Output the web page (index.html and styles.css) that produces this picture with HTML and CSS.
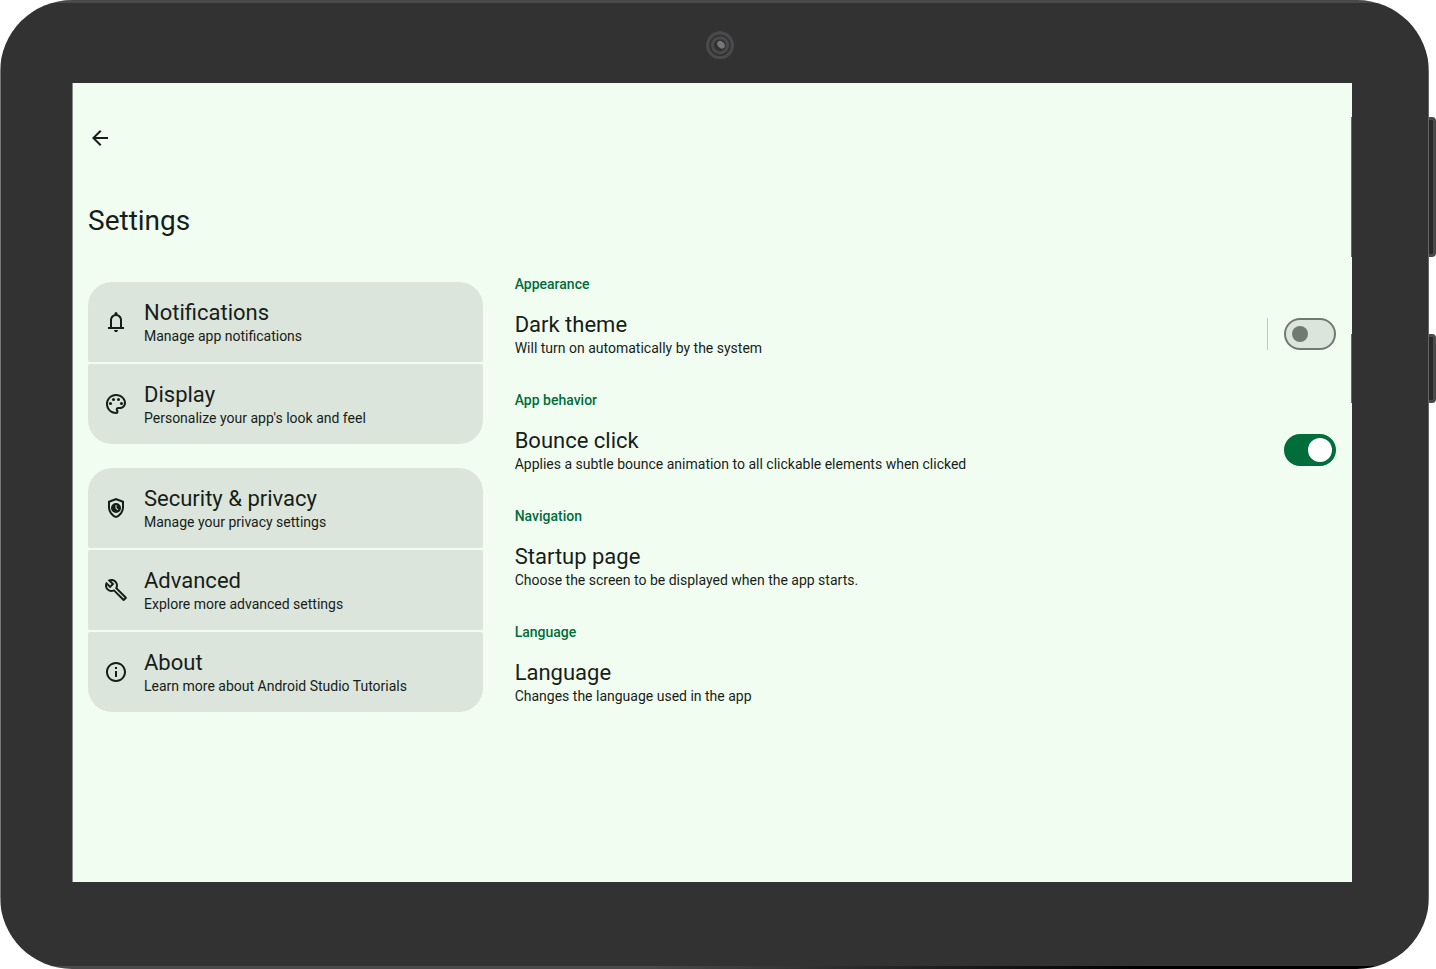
FILE: index.html
```html
<!DOCTYPE html>
<html lang="en">
<head>
<meta charset="utf-8">
<meta name="viewport" content="width=device-width, initial-scale=1">
<title>Settings</title>
<link rel="stylesheet" href="styles.css">
</head>
<body>
<div class="device">
  <span class="key key-volume"></span>
  <span class="key key-power"></span>
  <div class="bezel">
    <svg class="camera" viewBox="0 0 28 28" aria-hidden="true">
      <circle cx="14" cy="14.3" r="12.4" fill="#323232" stroke="#4a4a4a" stroke-width="3.2"/>
      <circle cx="14" cy="14.3" r="7.6" fill="#323232" stroke="#4a4a4a" stroke-width="3"/>
      <ellipse cx="15" cy="13.8" rx="4.3" ry="3.2" transform="rotate(45 15 13.8)" fill="#77777b"/>
    </svg>
    <div class="screen">
      <header class="app-bar">
        <button class="back" type="button" aria-label="Back">
          <svg class="icon" viewBox="0 0 24 24"><path d="M20 11H7.83l5.59-5.59L12 4l-8 8 8 8 1.41-1.41L7.83 13H20v-2z"/></svg>
        </button>
        <h1 class="page-title">Settings</h1>
      </header>
      <main class="panes">
        <nav class="menu" aria-label="Settings">
          <div class="group">
            <a class="card" href="#notifications">
              <svg class="icon" viewBox="0 0 24 24" aria-hidden="true"><path d="M4 19v-2h2v-7q0-2.07 1.25-3.69T10.5 4.2v-.7q0-.62.44-1.06T12 2t1.06.44T13.5 3.5v.7q2 .5 3.25 2.11T18 10v7h2v2H4Zm8 3q-.83 0-1.41-.59T10 20h4q0 .83-.59 1.41T12 22Zm-4-5h8v-7q0-1.65-1.18-2.83T12 6 9.18 7.17 8 10v7Z"/></svg>
              <span class="label"><span class="title">Notifications</span><span class="summary">Manage app notifications</span></span>
            </a>
            <a class="card" href="#display">
              <svg class="icon" viewBox="0 0 24 24" aria-hidden="true"><path d="M12 22C6.49 22 2 17.51 2 12S6.49 2 12 2s10 4.04 10 9c0 3.31-2.69 6-6 6h-1.77c-.28 0-.5.22-.5.5 0 .12.05.23.13.33.41.47.64 1.06.64 1.67A2.5 2.5 0 0 1 12 22zm0-18c-4.41 0-8 3.59-8 8s3.59 8 8 8c.28 0 .5-.22.5-.5a.54.54 0 0 0-.14-.35c-.41-.46-.63-1.05-.63-1.65a2.5 2.5 0 0 1 2.5-2.5H16c2.21 0 4-1.79 4-4 0-3.86-3.59-7-8-7z"/><circle cx="6.5" cy="11.5" r="1.5"/><circle cx="9.5" cy="7.5" r="1.5"/><circle cx="14.5" cy="7.5" r="1.5"/><circle cx="17.5" cy="11.5" r="1.5"/></svg>
              <span class="label"><span class="title">Display</span><span class="summary">Personalize your app's look and feel</span></span>
            </a>
          </div>
          <div class="group">
            <a class="card" href="#privacy">
              <svg class="icon" viewBox="0 0 24 24" aria-hidden="true"><path d="M12 22q-3.48-.88-5.74-3.99T4 11.1V5l8-3 8 3v6.1q0 3.8-2.26 6.91T12 22Zm0-2.1q2.6-.83 4.3-3.3T18 11.1V6.38l-6-2.25-6 2.25v4.72q0 3.03 1.7 5.5T12 19.9Z"/><path fill-rule="evenodd" d="M12 7a5 5 0 1 1 0 10a5 5 0 0 1 0-10Zm1.65 7.35.7-.7-1.85-1.85V9h-1v3.2Z"/></svg>
              <span class="label"><span class="title">Security &amp; privacy</span><span class="summary">Manage your privacy settings</span></span>
            </a>
            <a class="card" href="#advanced">
              <svg class="icon" viewBox="0 0 24 24" aria-hidden="true"><path d="M22.61 18.99l-9.08-9.08c.93-2.34.45-5.1-1.44-7C9.79.61 6.21.4 3.66 2.26L7.5 6.11 6.08 7.52 2.25 3.69C.39 6.23.6 9.82 2.9 12.11c1.86 1.86 4.57 2.35 6.89 1.48l9.11 9.11c.39.39 1.02.39 1.41 0l2.3-2.3c.4-.38.4-1.01 0-1.41zm-3 1.6l-9.46-9.46c-.61.45-1.29.72-2 .82-1.36.2-2.79-.21-3.83-1.25C3.37 9.76 2.93 8.5 3 7.26l3.09 3.09 4.24-4.24-3.09-3.09c1.24-.07 2.49.37 3.44 1.31 1.08 1.08 1.49 2.57 1.24 3.96-.12.71-.42 1.37-.88 1.96l9.45 9.45-.88.89z"/></svg>
              <span class="label"><span class="title">Advanced</span><span class="summary">Explore more advanced settings</span></span>
            </a>
            <a class="card" href="#about">
              <svg class="icon" viewBox="0 0 24 24" aria-hidden="true"><path d="M11 7h2v2h-2zm0 4h2v6h-2zm1-9C6.48 2 2 6.48 2 12s4.48 10 10 10 10-4.48 10-10S17.52 2 12 2zm0 18c-4.41 0-8-3.59-8-8s3.59-8 8-8 8 3.59 8 8-3.59 8-8 8z"/></svg>
              <span class="label"><span class="title">About</span><span class="summary">Learn more about Android Studio Tutorials</span></span>
            </a>
          </div>
        </nav>
        <div class="details">
          <section>
            <h2 class="section-title">Appearance</h2>
            <div class="row">
              <label class="label" for="dark-theme"><span class="title">Dark theme</span><span class="summary">Will turn on automatically by the system</span></label>
              <span class="divider"></span>
              <input class="switch" id="dark-theme" type="checkbox" role="switch">
            </div>
          </section>
          <section>
            <h2 class="section-title">App behavior</h2>
            <div class="row">
              <label class="label" for="bounce-click"><span class="title">Bounce click</span><span class="summary">Applies a subtle bounce animation to all clickable elements when clicked</span></label>
              <input class="switch" id="bounce-click" type="checkbox" role="switch" checked>
            </div>
          </section>
          <section>
            <h2 class="section-title">Navigation</h2>
            <button class="row" type="button"><span class="label"><span class="title">Startup page</span><span class="summary">Choose the screen to be displayed when the app starts.</span></span></button>
          </section>
          <section>
            <h2 class="section-title">Language</h2>
            <button class="row" type="button"><span class="label"><span class="title">Language</span><span class="summary">Changes the language used in the app</span></span></button>
          </section>
        </div>
      </main>
    </div>
    <span class="edge edge-volume"></span>
    <span class="edge edge-power"></span>
  </div>
</div>
</body>
</html>
```
FILE: styles.css
```css
* {
  box-sizing: border-box;
}

body {
  margin: 0;
  background: #fff;
  color: #171d19;
  font-family: Roboto, "Noto Sans", sans-serif;
}

.device {
  position: relative;
  display: flex;
  min-height: 100vh;
  padding-right: 7px;
}

.bezel {
  position: relative;
  flex: 1;
  display: flex;
  flex-direction: column;
  padding: 0 77px 87px 72px;
  border-radius: 72px;
  background:
    linear-gradient(#4a4a4a, #4a4a4a) top / 100% 3px no-repeat,
    linear-gradient(90deg, #4a4a4a 45%, #000 80%) bottom / 100% 3px no-repeat,
    linear-gradient(#777, #777) left / 1px 100% no-repeat,
    linear-gradient(#666, #666) right / 1px 100% no-repeat,
    #323232;
}

.camera {
  align-self: center;
  width: 28px;
  height: 28px;
  margin: 31px 0 24px 16px;
}

.key {
  position: absolute;
  right: 0;
  width: 14px;
  border: 3px solid #4a4a4a;
  border-radius: 4px;
  background: #292929;
}

.key-volume,
.edge-volume {
  top: 117px;
  height: 140px;
}

.key-power,
.edge-power {
  top: 334px;
  height: 69px;
}

.edge {
  position: absolute;
  right: 77px;
  width: 1px;
  background: #666;
}

.screen {
  flex: 1;
  background: #f2fdf2;
  box-shadow: inset 1px 0 #868a86;
}

.app-bar {
  padding: 35px 8px 18px;
}

.back {
  display: grid;
  place-items: center;
  width: 40px;
  height: 40px;
  padding: 0;
  border: 0;
  border-radius: 50%;
  background: none;
  color: inherit;
}

.icon {
  flex: none;
  width: 24px;
  height: 24px;
  fill: currentColor;
}

.page-title {
  margin: 44px 8px 0;
  font-size: 28px;
  line-height: 38px;
  font-weight: 400;
}

.panes {
  display: grid;
  grid-template-columns: 1fr 2fr;
}

.menu {
  display: flex;
  flex-direction: column;
  gap: 24px;
  padding: 24px 16px;
}

.group {
  display: flex;
  flex-direction: column;
  gap: 2px;
  border-radius: 24px;
  overflow: hidden;
}

.card {
  display: flex;
  align-items: center;
  gap: 16px;
  padding: 16px;
  border-radius: 2px;
  background: #dbe5dc;
  color: inherit;
  text-decoration: none;
}

.label {
  flex: 1;
  display: flex;
  flex-direction: column;
  padding-bottom: 2px;
}

.title {
  font-size: 22px;
  line-height: 30px;
}

.summary {
  font-size: 14px;
  line-height: 16px;
}

.section-title {
  margin: 0;
  padding: 16px 16px 0;
  color: #006d3b;
  font-size: 14px;
  line-height: 20px;
  font-weight: 500;
}

.row {
  display: flex;
  align-items: center;
  gap: 16px;
  width: 100%;
  padding: 16px;
  border: 0;
  background: none;
  color: inherit;
  font-family: inherit;
  text-align: left;
}

.divider {
  width: 1px;
  height: 32px;
  background: #bfc9c0;
}

.switch {
  appearance: none;
  display: flex;
  align-items: center;
  width: 52px;
  height: 32px;
  margin: 0;
  padding: 0 6px;
  border: 2px solid #6f7a70;
  border-radius: 16px;
  background: #dbe5dc;
}

.switch::before {
  content: "";
  width: 16px;
  height: 16px;
  border-radius: 50%;
  background: #6f7a70;
}

.switch:checked {
  justify-content: flex-end;
  padding: 0 2px;
  border-color: #006d3b;
  background: #006d3b;
}

.switch:checked::before {
  width: 24px;
  height: 24px;
  background: #fff;
}
```
